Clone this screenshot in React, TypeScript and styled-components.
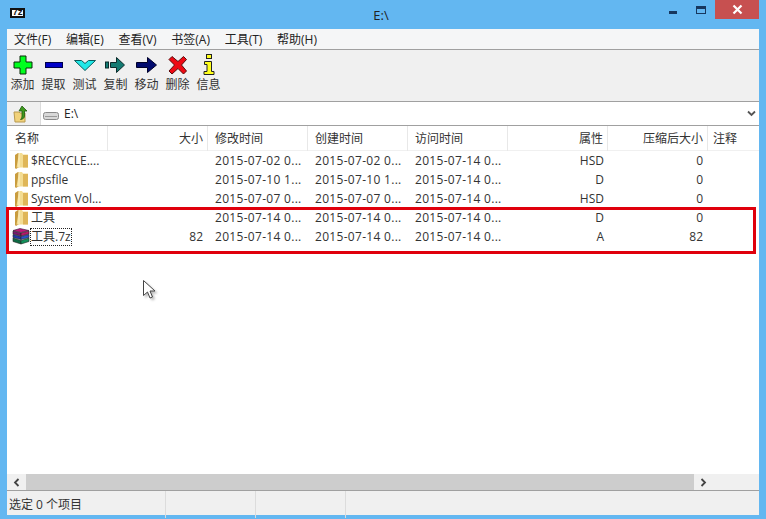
import React from 'react'
import styled, { createGlobalStyle } from 'styled-components'

const GlobalStyle = createGlobalStyle`
  html, body {
    margin: 0;
    padding: 0;
    height: 100%;
    overflow: hidden;
  }
  body {
    font-family: "Open Sans", "Noto Sans CJK SC", sans-serif;
    font-size: 12px;
    color: #222;
  }
`

const columns = '98px 100px 100px 100px 100px 100px 100px 1fr'

const menus = ['文件(F)', '编辑(E)', '查看(V)', '书签(A)', '工具(T)', '帮助(H)']

const Add = () => (
  <svg width="20" height="20" viewBox="0 0 20 20">
    <path d="M7 1h6v6h6v6h-6v6H7v-6H1V7h6z" fill="#00ff1e" stroke="#0a2a0a" strokeWidth="1" />
  </svg>
)
const Extract = () => (
  <svg width="20" height="20" viewBox="0 0 20 20">
    <rect x="1.5" y="7.5" width="17" height="5" fill="#0000c8" stroke="#00004a" />
  </svg>
)
const Test = () => (
  <svg width="22" height="20" viewBox="0 0 22 20">
    <path d="M0.5 5.5h7l3.5 3 3.5-3h7L11 15.5z" fill="#22e8e8" stroke="#0a5a5a" />
  </svg>
)
const Copy = () => (
  <svg width="22" height="20" viewBox="0 0 22 20">
    <rect x="0.5" y="7" width="3" height="6" fill="#127a72" stroke="#0a2a2a" />
    <path d="M5.5 7.5h6v-5l8 7.5-8 7.500v-5h-6z" fill="#127a72" stroke="#0a2a2a" />
  </svg>
)
const Move = () => (
  <svg width="22" height="20" viewBox="0 0 22 20">
    <path d="M0.5 7.5h11v-5l9 7.5-9 7.500v-5h-11z" fill="#000a6e" stroke="#00002a" />
  </svg>
)
const Remove = () => (
  <svg width="20" height="20" viewBox="0 0 20 20">
    <path d="M4 1.5l6 5 5.500-5 3 3-5 5.500 5 6-3 3-5.500-5.500-6 5.500-3-3 5.500-6-5.500-5.500z" fill="#ee0a14" stroke="#5a0a0a" />
  </svg>
)
const Info = () => (
  <svg width="14" height="22" viewBox="0 0 14 22">
    <rect x="4.5" y="0.5" width="5" height="4" fill="#ffff1e" stroke="#222" />
    <path d="M2.500 7.500h7v10h2.500v3h-10v-3h3v-7h-2.500z" fill="#ffff1e" stroke="#222" />
  </svg>
)

const tools = [
  { label: '添加', icon: <Add /> },
  { label: '提取', icon: <Extract /> },
  { label: '测试', icon: <Test /> },
  { label: '复制', icon: <Copy /> },
  { label: '移动', icon: <Move /> },
  { label: '删除', icon: <Remove /> },
  { label: '信息', icon: <Info /> },
]

const FolderIcon = () => (
  <svg width="13" height="17" viewBox="0 0 13 17">
    <path d="M0 3l3-2h1v14l-3 2-1-1z" fill="#c99c3e" />
    <path d="M4 1h3l1 1.500h5v13H1.500z" fill="#f3dc92" />
    <path d="M8 3h5v12.500H8z" fill="#dfb658" />
    <path d="M4 1v14" stroke="#fdf2c8" />
  </svg>
)

const ArchiveIcon = () => (
  <svg width="18" height="17" viewBox="0 0 18 17">
    <path d="M1 2.500L8 .5l9 2-8 2z" fill="#c21a7a" stroke="#30203a" strokeWidth=".6" />
    <path d="M1 3l8 2v3L1 6z" fill="#7a1a6e" stroke="#222" strokeWidth=".6" />
    <path d="M9 5l8-2v3l-8 2z" fill="#b5186a" stroke="#222" strokeWidth=".6" />
    <path d="M1 6.500l8 2v3l-8-2z" fill="#243aa8" stroke="#222" strokeWidth=".6" />
    <path d="M9 8.500l8-2v3l-8 2z" fill="#2a52c8" stroke="#222" strokeWidth=".6" />
    <path d="M1 10l8 2.500v3.500l-8-2.500z" fill="#0d6a44" stroke="#222" strokeWidth=".6" />
    <path d="M9 12.500l8-2.500v3.500L9 16z" fill="#12905a" stroke="#222" strokeWidth=".6" />
  </svg>
)

const headers = [
  { label: '名称', align: 'left' },
  { label: '大小', align: 'right' },
  { label: '修改时间', align: 'left' },
  { label: '创建时间', align: 'left' },
  { label: '访问时间', align: 'left' },
  { label: '属性', align: 'right' },
  { label: '压缩后大小', align: 'right' },
  { label: '注释', align: 'left' },
]

const rows = [
  { name: '$RECYCLE....', size: '', m: '2015-07-02 0...', c: '2015-07-02 0...', a: '2015-07-14 0...', attr: 'HSD', packed: '0' },
  { name: 'ppsfile', size: '', m: '2015-07-10 1...', c: '2015-07-10 1...', a: '2015-07-14 0...', attr: 'D', packed: '0' },
  { name: 'System Vol...', size: '', m: '2015-07-07 0...', c: '2015-07-07 0...', a: '2015-07-14 0...', attr: 'HSD', packed: '0' },
  { name: '工具', size: '', m: '2015-07-14 0...', c: '2015-07-14 0...', a: '2015-07-14 0...', attr: 'D', packed: '0' },
  { name: '工具.7z', size: '82', m: '2015-07-14 0...', c: '2015-07-14 0...', a: '2015-07-14 0...', attr: 'A', packed: '82', archive: true },
]

export default function App() {
  return (
    <Desktop>
      <GlobalStyle />
      <TitleBar>
        <AppLogo>7z</AppLogo>
        <TitleText>E:\</TitleText>
        <WindowButtons>
          <MinButton />
          <MaxButton />
          <CloseButton>
            <svg width="11" height="11" viewBox="0 0 11 11">
              <path d="M1.500 1.500l8 8M9.500 1.500l-8 8" stroke="#fff" strokeWidth="2.200" />
            </svg>
          </CloseButton>
        </WindowButtons>
      </TitleBar>
      <Client>
        <MenuBar>
          {menus.map((m) => (
            <MenuItem key={m}>{m}</MenuItem>
          ))}
        </MenuBar>
        <Toolbar>
          {tools.map((t) => (
            <ToolButton key={t.label}>
              <ToolIcon>{t.icon}</ToolIcon>
              <span>{t.label}</span>
            </ToolButton>
          ))}
        </Toolbar>
        <AddressRow>
          <UpButton>
            <svg width="16" height="18" viewBox="0 0 16 18">
              <path d="M1 7h5l1 1h5v9H2z" fill="#f1d27a" stroke="#b89a50" />
              <path d="M9 1l5 5h-2.500v5c0 2-2 3.500-4 3.500 1-1 1.500-2 1.500-3.500V6H6z" fill="#3f9a1e" stroke="#1f5a10" strokeWidth=".8" />
            </svg>
          </UpButton>
          <AddressBox>
            <DriveIcon>
              <svg width="16" height="10" viewBox="0 0 16 10">
                <rect x=".5" y="2.500" width="15" height="7" rx="2" fill="#d8d8d8" stroke="#8a8a8a" />
                <path d="M2 6.500h12" stroke="#9a9a9a" />
              </svg>
            </DriveIcon>
            <span>E:\</span>
            <ComboArrow>
              <svg width="9" height="7" viewBox="0 0 9 7">
                <path d="M1 1.500l3.500 3.500L8 1.500" fill="none" stroke="#555" strokeWidth="1.800" />
              </svg>
            </ComboArrow>
          </AddressBox>
        </AddressRow>
        <ListArea>
          <HeaderRow>
            {headers.map((h) => (
              <HeaderCell key={h.label} $align={h.align}>
                {h.label}
              </HeaderCell>
            ))}
          </HeaderRow>
          <Rows>
            {rows.map((r) => (
              <Row key={r.name}>
                <NameCell>
                  <NameIcon>{r.archive ? <ArchiveIcon /> : <FolderIcon />}</NameIcon>
                  <NameLabel $focused={!!r.archive}>{r.name}</NameLabel>
                </NameCell>
                <RightCell>{r.size}</RightCell>
                <DateCell>{r.m}</DateCell>
                <DateCell>{r.c}</DateCell>
                <DateCell>{r.a}</DateCell>
                <AttrCell>{r.attr}</AttrCell>
                <RightCell>{r.packed}</RightCell>
                <span />
              </Row>
            ))}
          </Rows>
          <ScrollBar>
            <ScrollArrow>
              <svg width="7" height="9" viewBox="0 0 7 9">
                <path d="M5.500 1L2 4.500 5.500 8" fill="none" stroke="#444" strokeWidth="1.800" />
              </svg>
            </ScrollArrow>
            <ScrollThumb />
            <ScrollArrow>
              <svg width="7" height="9" viewBox="0 0 7 9">
                <path d="M1.500 1L5 4.500 1.500 8" fill="none" stroke="#444" strokeWidth="1.800" />
              </svg>
            </ScrollArrow>
          </ScrollBar>
        </ListArea>
        <StatusBar>
          <StatusFirst>选定 0 个项目</StatusFirst>
          <StatusPane />
          <StatusPane />
          <StatusPane />
        </StatusBar>
      </Client>
      <Highlight />
      <Pointer>
        <svg width="16" height="22" viewBox="0 0 16 22">
          <path d="M1.500 1.500v15l4-3.500 2.500 6 2.500-1-2.500-6h5z" fill="#fff" stroke="#444" />
        </svg>
      </Pointer>
    </Desktop>
  )
}

const Desktop = styled.div`
  position: relative;
  width: 766px;
  height: 519px;
  background-color: #63b7f1;
  padding: 0 7px 4px 7px;
  box-sizing: border-box;
  display: flex;
  flex-direction: column;
  overflow: hidden;
`
const TitleBar = styled.div`
  height: 29px;
  flex-shrink: 0;
  display: flex;
  align-items: center;
  position: relative;
`
const AppLogo = styled.div`
  width: 11px;
  height: 6px;
  margin: -3px 0 0 3px;
  background-color: #fff;
  color: #111;
  font-family: "Liberation Mono", monospace;
  font-size: 9px;
  font-weight: bold;
  line-height: 6px;
  letter-spacing: -0.5px;
  text-align: center;
  border: 2px solid #111;
`
const TitleText = styled.div`
  flex: 1;
  text-align: center;
  color: #222;
  font-size: 13px;
  margin: 0 22px 0 0;
`
const WindowButtons = styled.div`
  position: absolute;
  right: 0;
  top: 0;
  display: flex;
  align-items: flex-start;
`
const MinButton = styled.div`
  width: 8px;
  height: 3px;
  margin: 11px 19px 0 0;
  background-color: #17375e;
`
const MaxButton = styled.div`
  width: 8px;
  height: 4px;
  margin: 6px 9px 0 0;
  border: 1.500px solid #17375e;
  border-top-width: 3px;
`
const CloseButton = styled.div`
  width: 44px;
  height: 19px;
  background-color: #c75050;
  display: flex;
  align-items: center;
  justify-content: center;
`
const Client = styled.div`
  flex: 1;
  display: flex;
  flex-direction: column;
  background-color: #f0f0f0;
  min-height: 0;
`
const MenuBar = styled.div`
  height: 20px;
  flex-shrink: 0;
  display: flex;
  align-items: center;
  background-color: #f5f6f7;
  border-bottom: 1px solid #a0a0a0;
  padding-left: 7px;
  gap: 14.7px;
`
const MenuItem = styled.span`
  white-space: nowrap;
`
const Toolbar = styled.div`
  height: 51px;
  flex-shrink: 0;
  display: flex;
  background-color: #f0f0f0;
  border-bottom: 1px solid #a0a0a0;
`
const ToolButton = styled.div`
  width: 31px;
  display: flex;
  flex-direction: column;
  align-items: center;
  color: #333;
  padding-top: 3px;
  line-height: 16px;
`
const ToolIcon = styled.div`
  height: 24px;
  display: flex;
  align-items: center;
  justify-content: center;
`
const AddressRow = styled.div`
  height: 23px;
  flex-shrink: 0;
  display: flex;
  background-color: #f0f0f0;
`
const UpButton = styled.div`
  width: 33px;
  display: flex;
  align-items: center;
  justify-content: center;
  padding-right: 6px;
  box-sizing: border-box;
`
const AddressBox = styled.div`
  flex: 1;
  display: flex;
  align-items: center;
  background-color: #fff;
  border-left: 1px solid #dcdcdc;
`
const DriveIcon = styled.div`
  display: flex;
  margin: 3px 5px 0 2px;
`
const ComboArrow = styled.div`
  margin-left: auto;
  margin-right: 3px;
  display: flex;
`
const ListArea = styled.div`
  flex: 1;
  min-height: 0;
  display: flex;
  flex-direction: column;
  background-color: #fff;
  border-top: 1px solid #a0a0a0;
  border-bottom: 1px solid #a0a0a0;
`
const HeaderRow = styled.div`
  height: 24px;
  flex-shrink: 0;
  display: grid;
  grid-template-columns: ${columns};
  margin-left: 3px;
  border-bottom: 1px solid #f0f0f0;
`
const HeaderCell = styled.div<{ $align: string }>`
  color: #333;
  line-height: 25px;
  text-align: ${(p) => p.$align};
  padding: 0 4px 0 5px;
  border-right: 1px solid #e8e8e8;
  white-space: nowrap;
  &:nth-child(n + 3):nth-child(-n + 5) {
    padding-left: 7px;
  }
  &:last-child {
    border-right: none;
  }
`
const Rows = styled.div`
  flex: 1;
  padding: 0 0 0 3px;
`
const Row = styled.div`
  height: 19px;
  display: grid;
  grid-template-columns: ${columns};
  align-items: center;
  color: #333;
  white-space: nowrap;
`
const NameCell = styled.div`
  display: flex;
  align-items: center;
`
const NameIcon = styled.div`
  width: 18px;
  display: flex;
  justify-content: center;
  flex-shrink: 0;
  margin-left: 2px;
`
const NameLabel = styled.span<{ $focused: boolean }>`
  margin-left: 0;
  padding: 0 1px;
  outline: ${(p) => (p.$focused ? '1px dotted #222' : 'none')};
  outline-offset: -1px;
  line-height: 18px;
`
const RightCell = styled.div`
  text-align: right;
  padding-right: 5px;
`
const DateCell = styled.div`
  padding-left: 7px;
  letter-spacing: 0.3px;
`
const AttrCell = styled.div`
  text-align: right;
  padding-right: 4px;
`
const ScrollBar = styled.div`
  height: 16px;
  flex-shrink: 0;
  display: flex;
  background-color: #f0f0f0;
`
const ScrollArrow = styled.div`
  width: 19px;
  flex-shrink: 0;
  display: flex;
  align-items: center;
  justify-content: center;
`
const ScrollThumb = styled.div`
  width: 668px;
  background-color: #cdcdcd;
`
const StatusBar = styled.div`
  height: 24px;
  flex-shrink: 0;
  display: grid;
  grid-template-columns: 159px 90px 90px 1fr;
  line-height: 27px;
  background-color: #f0f0f0;
  color: #333;
`
const StatusFirst = styled.div`
  padding-left: 2px;
  border-right: 1px solid #dcdcdc;
`
const StatusPane = styled.div`
  border-right: 1px solid #dcdcdc;
  &:last-child {
    border-right: none;
  }
`
const Highlight = styled.div`
  position: absolute;
  left: 6px;
  top: 207px;
  width: 750px;
  height: 47px;
  box-sizing: border-box;
  border: 3px solid #e0000c;
  pointer-events: none;
`
const Pointer = styled.div`
  position: absolute;
  left: 142px;
  top: 279px;
  filter: drop-shadow(2px 2px 1px rgba(0, 0, 0, 0.25));
`
